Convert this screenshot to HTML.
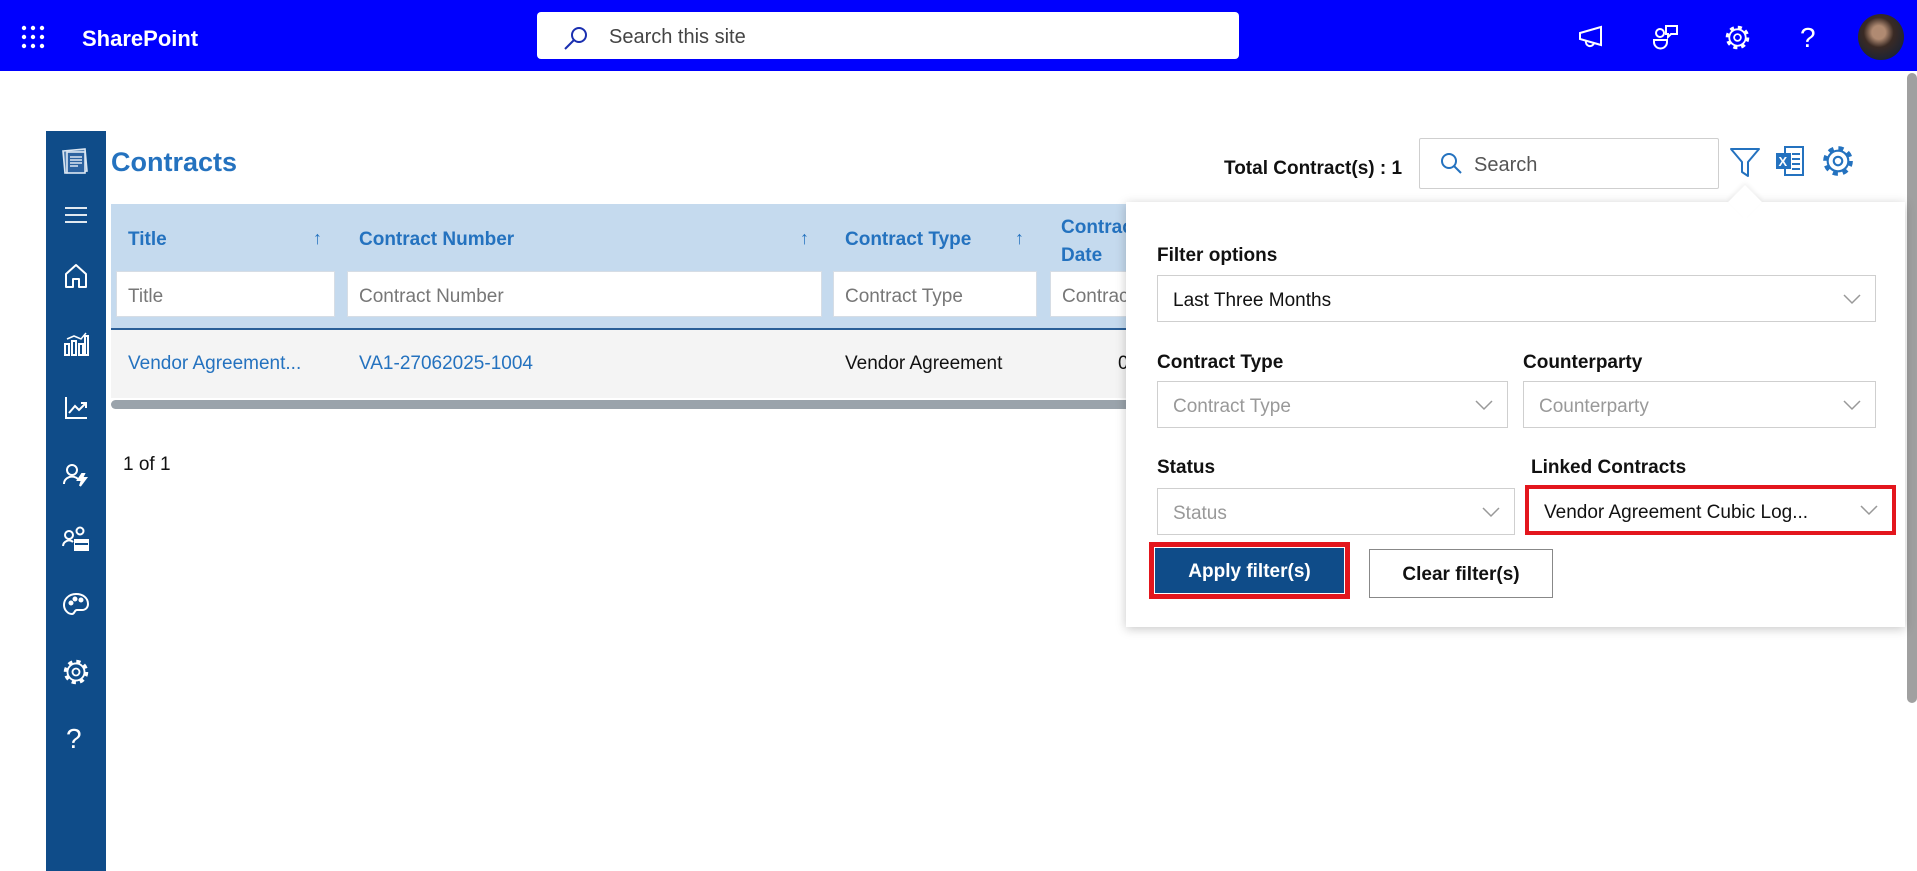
<!DOCTYPE html>
<html><head><meta charset="utf-8">
<style>
*{box-sizing:border-box;margin:0;padding:0}
body{width:1917px;height:871px;overflow:hidden;background:#fff;font-family:"Liberation Sans",sans-serif;position:relative}
.a{position:absolute}
.top{left:0;top:0;width:1917px;height:71px;background:#0000fe}
.sb{left:46px;top:131px;width:60px;height:740px;background:#0f4c89}
.sb svg{position:absolute;left:17px}
.hdr{color:#2472bf;font-weight:bold;font-size:19px}
.inp{background:#fff;border:1px solid #d6dde5;height:46px;font-size:19px;color:#777;padding:14px 11px 0;white-space:nowrap;overflow:hidden}
.lbl{font-size:19px;font-weight:bold;color:#111}
.dd{background:#fff;border:1px solid #cfcfcf;height:47px;font-size:19px;padding:14px 15px 0;color:#999;white-space:nowrap}
.dd svg{position:absolute;right:14px;top:17px}
</style></head><body>
<div class="a top"></div>
<svg class="a" style="left:21px;top:25px" width="24" height="24" viewBox="0 0 24 24" fill="#fff">
<circle cx="3" cy="3" r="2.2"/><circle cx="12" cy="3" r="2.2"/><circle cx="21" cy="3" r="2.2"/>
<circle cx="3" cy="12" r="2.2"/><circle cx="12" cy="12" r="2.2"/><circle cx="21" cy="12" r="2.2"/>
<circle cx="3" cy="21" r="2.2"/><circle cx="12" cy="21" r="2.2"/><circle cx="21" cy="21" r="2.2"/></svg>
<div class="a" style="left:82px;top:26px;color:#fff;font-size:22px;font-weight:bold">SharePoint</div>
<div class="a" style="left:537px;top:12px;width:702px;height:47px;background:#fff;border-radius:4px"></div>
<svg class="a" style="left:563px;top:25px" width="26" height="26" viewBox="0 0 26 26" fill="none" stroke="#1a2fb0" stroke-width="2"><circle cx="16" cy="10" r="7"/><path d="M11 15L2 24"/></svg>
<div class="a" style="left:609px;top:26px;font-size:20px;color:#444">Search this site</div>
<svg class="a" style="left:1578px;top:25px" width="26" height="24" viewBox="0 0 26 24" fill="none" stroke="#fff" stroke-width="2"><path d="M2 8L23 2V20L2 14Z"/><path d="M8 16a4 4 0 0 0 8 2"/></svg>
<svg class="a" style="left:1653px;top:24px" width="26" height="26" viewBox="0 0 26 26" fill="none" stroke="#fff" stroke-width="2"><circle cx="7" cy="9" r="4"/><path d="M1 16h13v2a6 6 0 0 1-13 0z"/><path d="M13 2h11v8h-6l-3 3v-3h-2z"/></svg>
<svg class="a" style="left:1724px;top:24px" width="27" height="27" viewBox="0 0 24 24" fill="none" stroke="#fff"><circle cx="12" cy="12" r="9" stroke-width="3" stroke-dasharray="3.6 3.47"/><circle cx="12" cy="12" r="7.3" stroke-width="1.6"/><circle cx="12" cy="12" r="3" stroke-width="1.6"/></svg>
<div class="a" style="left:1800px;top:22px;color:#fff;font-size:28px">?</div>
<div class="a" style="left:1858px;top:14px;width:46px;height:46px;border-radius:50%;background:radial-gradient(circle at 45% 40%,#b08a72 0 18%,#3a2a24 40%,#1d2433 75%,#6b6f7a)"></div>
<div class="a" style="left:1907px;top:73px;width:10px;height:630px;background:#a0a0a0;border-radius:5px"></div>
<div class="a sb">
<svg style="top:16px;left:15px" width="30" height="28" viewBox="0 0 30 28" fill="none" stroke="#dbe6f2" stroke-width="1.6"><path d="M2 4L24 2L26 24L4 26Z" fill="#5a86b5"/><rect x="6" y="5" width="18" height="21" fill="#2c62a0"/><path d="M9 10h12M9 13h12M9 16h12M9 19h8" stroke-width="1.5"/></svg>
<svg style="top:75px;left:19px" width="22" height="18" viewBox="0 0 22 18" stroke="#fff" stroke-width="1.8"><path d="M0 2h22M0 9h22M0 16h22"/></svg>
<svg style="top:132px;left:18px" width="24" height="26" viewBox="0 0 24 26" fill="none" stroke="#fff" stroke-width="2"><path d="M2 11L12 2L22 11V24H15V16H9V24H2Z" stroke-linejoin="round"/></svg>
<svg style="top:199px;left:17px" width="26" height="26" viewBox="0 0 26 26" fill="none" stroke="#fff" stroke-width="2"><path d="M2 14h4v11H2zM9 11h4v14H9zM16 14h4v11h-4zM22 6h3v19h-3z"/><path d="M4 9L11 6L18 9L23 3" stroke-width="1.5"/></svg>
<svg style="top:265px;left:18px" width="24" height="24" viewBox="0 0 24 24" fill="none" stroke="#fff" stroke-width="2"><path d="M2 1V22H23"/><path d="M5 17L11 10L15 14L22 7M17 7h5v5"/></svg>
<svg style="top:331px;left:17px" width="26" height="26" viewBox="0 0 26 26" fill="none" stroke="#fff" stroke-width="2"><circle cx="9" cy="8" r="5"/><path d="M1 22a8 7 0 0 1 14-5"/><path d="M19 12l-4 6h4l-2 6 6-8h-4l2-4z" fill="#fff"/></svg>
<svg style="top:395px;left:16px" width="28" height="26" viewBox="0 0 28 26" fill="none" stroke="#fff" stroke-width="2"><circle cx="7" cy="9" r="4"/><circle cx="18" cy="5" r="3.5"/><path d="M1 20a6 6 0 0 1 10-4"/><rect x="13" y="14" width="13" height="10" fill="#fff"/><path d="M13 18h13" stroke="#0f4c89"/></svg>
<svg style="top:461px;left:17px" width="26" height="26" viewBox="0 0 26 26" fill="none" stroke="#fff" stroke-width="2"><path d="M13 2C5 2 1 8 1 13c0 5 4 9 8 9 3 0 2-4 5-4h5c4 0 6-3 6-6C25 6 20 2 13 2z"/><circle cx="8" cy="11" r="1.5" fill="#fff"/><circle cx="12" cy="7" r="1.5" fill="#fff"/><circle cx="18" cy="8" r="1.5" fill="#fff"/></svg>
<svg style="top:527px;left:16px" width="28" height="28" viewBox="0 0 24 24" fill="none" stroke="#fff"><circle cx="12" cy="12" r="9" stroke-width="3" stroke-dasharray="3.6 3.47"/><circle cx="12" cy="12" r="7.3" stroke-width="1.6"/><circle cx="12" cy="12" r="3" stroke-width="1.6"/></svg>
<div style="position:absolute;left:20px;top:592px;color:#fff;font-size:28px">?</div>
</div>
<div class="a" style="left:111px;top:147px;font-size:27px;font-weight:bold;color:#2472bf">Contracts</div>
<div class="a" style="left:111px;top:204px;width:1020px;height:125px;background:#c5daee"></div>
<div class="a hdr" style="left:128px;top:229px">Title</div>
<div class="a" style="left:313px;top:228px;color:#2472bf;font-size:18px">↑</div>
<div class="a hdr" style="left:359px;top:229px">Contract Number</div>
<div class="a" style="left:800px;top:228px;color:#2472bf;font-size:18px">↑</div>
<div class="a hdr" style="left:845px;top:229px">Contract Type</div>
<div class="a" style="left:1015px;top:228px;color:#2472bf;font-size:18px">↑</div>
<div class="a hdr" style="left:1061px;top:214px;line-height:28px">Contract<br>Date</div>
<div class="a inp" style="left:116px;top:271px;width:219px">Title</div>
<div class="a inp" style="left:347px;top:271px;width:475px">Contract Number</div>
<div class="a inp" style="left:833px;top:271px;width:204px">Contract Type</div>
<div class="a inp" style="left:1050px;top:271px;width:90px">Contract</div>
<div class="a" style="left:111px;top:328px;width:1020px;height:2px;background:#2a5f98"></div>
<div class="a" style="left:111px;top:330px;width:1020px;height:68px;background:#f4f4f4"></div>
<div class="a" style="left:128px;top:353px;font-size:19px;color:#2472bf">Vendor Agreement...</div>
<div class="a" style="left:359px;top:353px;font-size:19px;color:#2472bf">VA1-27062025-1004</div>
<div class="a" style="left:845px;top:353px;font-size:19px;color:#111">Vendor Agreement</div>
<div class="a" style="left:1118px;top:353px;font-size:19px;color:#111">0</div>
<div class="a" style="left:111px;top:400px;width:1020px;height:9px;background:#9aa3ab;border-radius:5px"></div>
<div class="a" style="left:123px;top:454px;font-size:19px;color:#111">1 of 1</div>
<div class="a" style="left:1224px;top:158px;font-size:19px;font-weight:bold;color:#111">Total Contract(s) : 1</div>
<div class="a" style="left:1419px;top:138px;width:300px;height:51px;border:1px solid #cfcfcf;border-radius:2px;background:#fff"></div>
<svg class="a" style="left:1440px;top:152px" width="24" height="24" viewBox="0 0 24 24" fill="none" stroke="#2472bf" stroke-width="2"><circle cx="9" cy="9" r="7"/><path d="M14 14L21 21"/></svg>
<div class="a" style="left:1474px;top:154px;font-size:20px;color:#555">Search</div>
<svg class="a" style="left:1729px;top:146px" width="32" height="32" viewBox="0 0 32 32" fill="none" stroke="#2472bf" stroke-width="2"><path d="M2 3H30L19 16V30L13 26V16Z" stroke-linejoin="round"/></svg>
<svg class="a" style="left:1775px;top:145px" width="30" height="32" viewBox="0 0 30 32"><path d="M10 2H28V30H10Z" fill="#fff" stroke="#2472bf" stroke-width="2"/><path d="M17 9h8M17 14h8M17 19h8M17 24h8" stroke="#2472bf" stroke-width="2"/><rect x="1" y="8" width="15" height="16" fill="#2472bf"/><text x="3.5" y="21" font-family="Liberation Sans" font-weight="bold" font-size="13" fill="#fff">X</text></svg>
<svg class="a" style="left:1821px;top:144px" width="34" height="34" viewBox="0 0 24 24" fill="none" stroke="#2472bf"><circle cx="12" cy="12" r="9" stroke-width="3" stroke-dasharray="3.6 3.47"/><circle cx="12" cy="12" r="7.3" stroke-width="1.5"/><circle cx="12" cy="12" r="3" stroke-width="1.5"/></svg>
<div class="a" style="left:1126px;top:202px;width:779px;height:425px;background:#fff;box-shadow:0 2px 10px rgba(0,0,0,.22)"></div>
<div class="a" style="left:1733px;top:190px;width:24px;height:24px;background:#fff;transform:rotate(45deg);box-shadow:-2px -2px 4px rgba(0,0,0,.06)"></div>
<div class="a lbl" style="left:1157px;top:245px">Filter options</div>
<div class="a dd" style="left:1157px;top:275px;width:719px;color:#111">Last Three Months<svg width="18" height="12" viewBox="0 0 18 12" fill="none" stroke="#999" stroke-width="1.5"><path d="M1 2L9 10L17 2"/></svg></div>
<div class="a lbl" style="left:1157px;top:352px">Contract Type</div>
<div class="a lbl" style="left:1523px;top:352px">Counterparty</div>
<div class="a dd" style="left:1157px;top:381px;width:351px">Contract Type<svg width="18" height="12" viewBox="0 0 18 12" fill="none" stroke="#999" stroke-width="1.5"><path d="M1 2L9 10L17 2"/></svg></div>
<div class="a dd" style="left:1523px;top:381px;width:353px">Counterparty<svg width="18" height="12" viewBox="0 0 18 12" fill="none" stroke="#999" stroke-width="1.5"><path d="M1 2L9 10L17 2"/></svg></div>
<div class="a lbl" style="left:1157px;top:457px">Status</div>
<div class="a lbl" style="left:1531px;top:457px">Linked Contracts</div>
<div class="a dd" style="left:1157px;top:488px;width:358px">Status<svg width="18" height="12" viewBox="0 0 18 12" fill="none" stroke="#999" stroke-width="1.5"><path d="M1 2L9 10L17 2"/></svg></div>
<div class="a dd" style="left:1525px;top:485px;width:371px;height:50px;border:4px solid #e3161d;color:#111;padding:13px 15px 0">Vendor Agreement Cubic Log...<svg style="top:15px" width="18" height="12" viewBox="0 0 18 12" fill="none" stroke="#999" stroke-width="1.5"><path d="M1 2L9 10L17 2"/></svg></div>
<div class="a" style="left:1149px;top:542px;width:201px;height:57px;border:5px solid #e3161d;background:#fff;padding:1px"><div style="background:#0f4c89;height:100%;color:#fff;font-weight:bold;font-size:19px;text-align:center;line-height:48px">Apply filter(s)</div></div>
<div class="a" style="left:1369px;top:549px;width:184px;height:49px;border:1px solid #888;background:#fff;color:#111;font-weight:bold;font-size:19px;text-align:center;line-height:50px">Clear filter(s)</div>
</body></html>
